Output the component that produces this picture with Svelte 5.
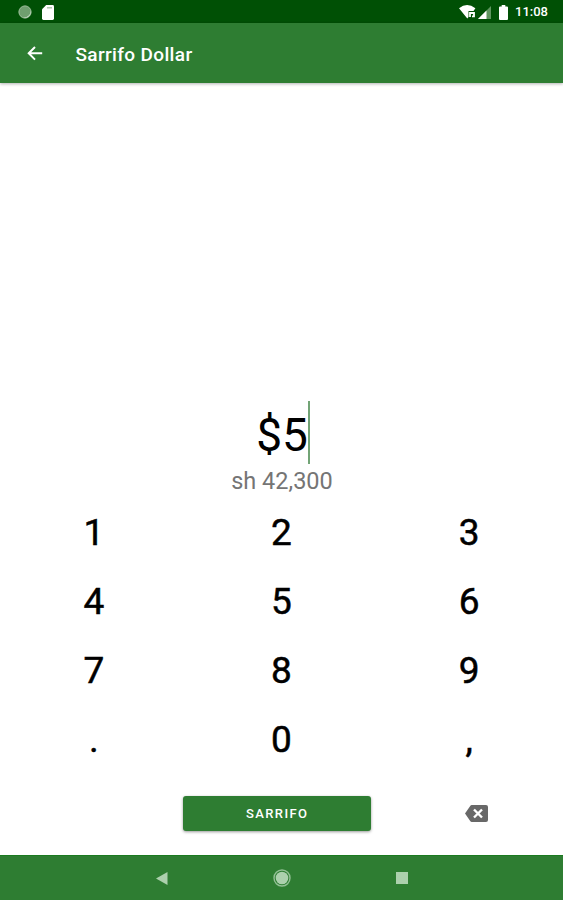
<script>
    let amount = "5";
    let rate = 8460;

    const keys = ["1", "2", "3", "4", "5", "6", "7", "8", "9", ".", "0", ","];

    $: converted = (Number(amount.replace(",", ".")) * rate).toLocaleString("en-US");

    const press = (key) => {
        amount += key;
    };

    const erase = () => {
        amount = amount.slice(0, -1);
    };
</script>

<div class="screen">
    <div class="status-bar">
        <div class="status-left">
            <svg width="14" height="14" viewBox="0 0 14 14">
                <circle cx="7" cy="7" r="6.1" fill="#6f9f6f" stroke="#a3c2a1" stroke-width="1" />
                <path d="M12.6 5.5A6.1 6.1 0 0 1 5 12.8A7 7 0 0 0 12.6 5.5Z" fill="#d4e2d3" />
            </svg>
            <svg width="12" height="15" viewBox="0 0 12 15">
                <path d="M4.2 0H10.6Q12 0 12 1.4V13.6Q12 15 10.6 15H1.4Q0 15 0 13.6V4.2Z" fill="#fff" />
                <path d="M5 2.8H10" stroke="#a9c3a9" stroke-width="1.4" />
            </svg>
        </div>
        <div class="status-right">
            <svg class="wifi" width="17" height="14" viewBox="0 0 17 14">
                <path d="M0 3.2Q8-3 16.4 3.2L14.5 6H9.5V12L8.3 13.5Z" fill="#fff" />
                <path d="M11 12V8H15V11.3H13" fill="none" stroke="#fff" stroke-width="1.8" />
            </svg>
            <svg class="signal" width="13" height="13" viewBox="0 0 13 13">
                <path d="M13 0V13H0Z" fill="#5f955f" />
                <path d="M8.5 4.5V13H0Z" fill="#fff" />
            </svg>
            <svg class="battery" width="9" height="15" viewBox="0 0 9 15">
                <path d="M2.7 0H6.3V1.5H8Q9 1.5 9 2.5V14Q9 15 8 15H1Q0 15 0 14V2.5Q0 1.5 1 1.5H2.7Z" fill="#fff" />
            </svg>
            <span class="clock">11:08</span>
        </div>
    </div>

    <header class="toolbar">
        <button class="back" aria-label="Back">
            <svg width="16" height="16" viewBox="0 0 16 16">
                <path d="M15.2 8.3H1.7M8 2L1.7 8.3L8 14.6" fill="none" stroke="#fff" stroke-width="2" />
            </svg>
        </button>
        <h1>Sarrifo Dollar</h1>
    </header>

    <main>
        <div class="amount">
            <span>${amount}</span>
            <i class="cursor"></i>
        </div>
        <div class="converted">sh {converted}</div>

        <div class="keypad">
            {#each keys as key}
                <button class="key" on:click={() => press(key)}>{key}</button>
            {/each}
        </div>

        <div class="actions">
            <button class="submit">SARRIFO</button>
            <button class="erase" aria-label="Delete" on:click={erase}>
                <svg width="23" height="17" viewBox="0 0 23 17">
                    <path d="M6.8 0H21Q23 0 23 2V15Q23 17 21 17H6.8Q5.8 17 5.2 16.1L0 8.5L5.2 .9Q5.8 0 6.8 0Z" fill="#686868" />
                    <path d="M9 4.5L17 12.5M17 4.5L9 12.5" stroke="#fff" stroke-width="2.4" />
                </svg>
            </button>
        </div>
    </main>

    <nav class="nav-bar">
        <svg width="12" height="13" viewBox="0 0 12 13">
            <path d="M11.5 0V13L0 6.5Z" fill="#acd0ad" />
        </svg>
        <svg width="18" height="18" viewBox="0 0 18 18">
            <circle cx="9" cy="9" r="8" fill="none" stroke="#93c095" stroke-width="1.4" />
            <circle cx="9" cy="9" r="6.3" fill="#acd0ad" />
        </svg>
        <svg width="12" height="12" viewBox="0 0 12 12">
            <rect width="12" height="12" fill="#acd0ad" />
        </svg>
    </nav>
</div>

<style>
    :global(body) {
        background: #fff;
    }

    .screen {
        display: flex;
        flex-direction: column;
        height: 900px;
        font-family: Roboto, sans-serif;
        background: #fff;
    }

    button {
        border: 0;
        padding: 0;
        background: none;
        font-family: inherit;
        cursor: pointer;
    }

    svg {
        display: block;
    }

    .status-bar {
        box-sizing: border-box;
        display: flex;
        justify-content: space-between;
        align-items: center;
        height: 23px;
        padding: 1px 15px 0 18px;
        background: #005005;
    }

    .status-left,
    .status-right {
        display: flex;
        align-items: center;
    }

    .status-left {
        gap: 10px;
    }

    .signal {
        margin-left: 2px;
    }

    .battery {
        margin-left: 8px;
    }

    .clock {
        margin-left: 7px;
        font-size: 13px;
        font-weight: 500;
        line-height: 20px;
        color: #fff;
    }

    .toolbar {
        display: flex;
        align-items: center;
        height: 60px;
        padding-left: 27px;
        background: #2e7d32;
        box-shadow: 0 1px 3px rgba(0, 0, 0, 0.3);
    }

    h1 {
        margin: 2px 0 0 32.5px;
        font-size: 19px;
        font-weight: 500;
        letter-spacing: 0.35px;
        color: #fff;
    }

    main {
        flex: 1;
        display: flex;
        flex-direction: column;
        justify-content: flex-end;
    }

    .amount {
        display: flex;
        justify-content: center;
        align-items: center;
        height: 63px;
        padding-left: 3px;
        font-size: 46px;
        color: #000;
    }

    .amount span {
        padding-top: 4px;
    }

    .cursor {
        width: 2px;
        height: 63px;
        background: #72a476;
    }

    .converted {
        height: 33px;
        padding-left: 1px;
        font-size: 23.5px;
        line-height: 35px;
        text-align: center;
        color: #757575;
    }

    .keypad {
        display: grid;
        grid-template-columns: repeat(3, 1fr);
        grid-auto-rows: 69px;
    }

    .key {
        padding-top: 1px;
        font-size: 37px;
        font-weight: 400;
        -webkit-text-stroke: 0.5px #000;
        color: #000;
    }

    .actions {
        box-sizing: border-box;
        display: grid;
        grid-template-columns: repeat(3, 1fr);
        align-items: center;
        height: 82px;
        padding-bottom: 2px;
    }

    .submit {
        grid-column: 2;
        height: 35px;
        margin: 0 4px 0 -4.5px;
        border-radius: 3px;
        background: #2e7d32;
        box-shadow: 0 1px 3px rgba(0, 0, 0, 0.4);
        font-size: 13px;
        font-weight: 500;
        letter-spacing: 1.4px;
        color: #fff;
    }

    .erase {
        justify-self: center;
        padding-left: 15px;
    }

    .nav-bar {
        box-sizing: border-box;
        display: flex;
        justify-content: center;
        align-items: center;
        gap: 105px;
        height: 45px;
        border-top: 1px solid #1b7a20;
        background: #2e7d32;
    }
</style>
